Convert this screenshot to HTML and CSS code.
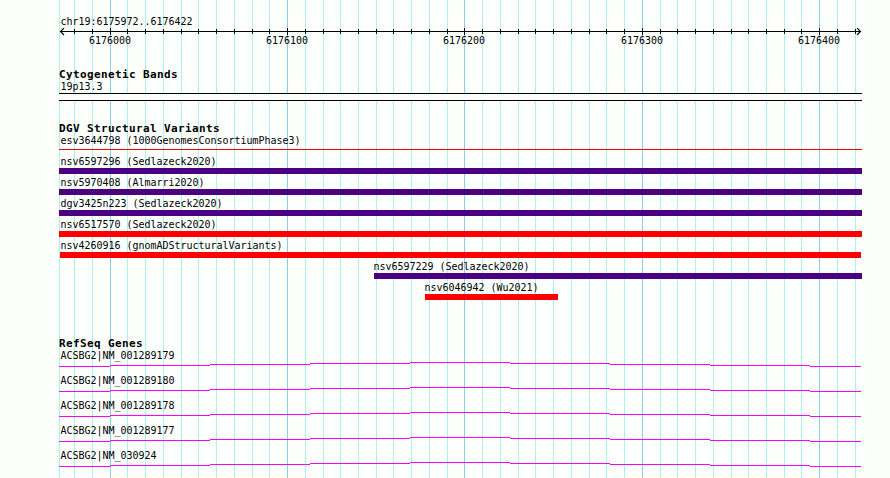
FILE: index.html
```html
<!DOCTYPE html>
<html lang="en">
<head>
    <meta charset="UTF-8">
    <title>chr19:6175972..6176422</title>
    <link rel="stylesheet" href="styles.css">
</head>
<body>
    <div class="browser">
        <!-- 10 bp / 100 bp grid -->
        <svg class="grid" width="803" height="478" viewBox="59 0 803 478">
            <path class="minor" d="M59.5 0V478M74.5 0V478M92.5 0V478M127.5 0V478M145.5 0V478M163.5 0V478M181.5 0V478M198.5 0V478M216.5 0V478M234.5 0V478M252.5 0V478M269.5 0V478M305.5 0V478M323.5 0V478M340.5 0V478M358.5 0V478M376.5 0V478M393.5 0V478M411.5 0V478M429.5 0V478M447.5 0V478M482.5 0V478M500.5 0V478M518.5 0V478M535.5 0V478M553.5 0V478M571.5 0V478M589.5 0V478M606.5 0V478M624.5 0V478M660.5 0V478M677.5 0V478M695.5 0V478M713.5 0V478M731.5 0V478M748.5 0V478M766.5 0V478M784.5 0V478M801.5 0V478M837.5 0V478M855.5 0V478"/>
            <path class="major" d="M110.5 0V478M287.5 0V478M464.5 0V478M642.5 0V478M819.5 0V478"/>
        </svg>

        <div class="tracks">
            <div class="region label">chr19:6175972..6176422</div>
            <svg class="ruler" width="803" height="20" viewBox="59 28 803 20">
                <path d="M60 31.5H861"/>
                <path d="M74.5 29V34M92.5 29V34M127.5 29V34M145.5 29V34M163.5 29V34M181.5 29V34M198.5 29V34M216.5 29V34M234.5 29V34M252.5 29V34M269.5 29V34M305.5 29V34M323.5 29V34M340.5 29V34M358.5 29V34M376.5 29V34M393.5 29V34M411.5 29V34M429.5 29V34M447.5 29V34M482.5 29V34M500.5 29V34M518.5 29V34M535.5 29V34M553.5 29V34M571.5 29V34M589.5 29V34M606.5 29V34M624.5 29V34M660.5 29V34M677.5 29V34M695.5 29V34M713.5 29V34M731.5 29V34M748.5 29V34M766.5 29V34M784.5 29V34M801.5 29V34M837.5 29V34M855.5 29V34"/>
                <path d="M110.5 28V35M287.5 28V35M464.5 28V35M642.5 28V35M819.5 28V35"/>
                <path class="arrow" d="M64 28L60.5 31.5L64 35M857 28L860.5 31.5L857 35"/>
                <text x="89" y="44">6176000</text>
                <text x="266" y="44">6176100</text>
                <text x="443" y="44">6176200</text>
                <text x="621" y="44">6176300</text>
                <text x="798" y="44">6176400</text>
            </svg>

            <div class="track cyto">
                <div class="title">Cytogenetic Bands</div>
                <div class="label">19p13.3</div>
                <div class="band"></div>
            </div>

            <div class="track variants">
                <div class="title">DGV Structural Variants</div>
                <div class="variant">
                    <div class="label">esv3644798 (1000GenomesConsortiumPhase3)</div>
                    <div class="bar thin"></div>
                </div>
                <div class="variant">
                    <div class="label">nsv6597296 (Sedlazeck2020)</div>
                    <div class="bar complex"></div>
                </div>
                <div class="variant">
                    <div class="label">nsv5970408 (Almarri2020)</div>
                    <div class="bar complex"></div>
                </div>
                <div class="variant">
                    <div class="label">dgv3425n223 (Sedlazeck2020)</div>
                    <div class="bar complex"></div>
                </div>
                <div class="variant">
                    <div class="label">nsv6517570 (Sedlazeck2020)</div>
                    <div class="bar loss"></div>
                </div>
                <div class="variant">
                    <div class="label">nsv4260916 (gnomADStructuralVariants)</div>
                    <div class="bar loss inset"></div>
                </div>
                <div class="variant partial" style="margin-left: 315px">
                    <div class="label">nsv6597229 (Sedlazeck2020)</div>
                    <div class="bar complex"></div>
                </div>
                <div class="variant partial" style="margin-left: 366px">
                    <div class="label">nsv6046942 (Wu2021)</div>
                    <div class="bar loss" style="width: 133px"></div>
                </div>
            </div>

            <div class="track genes">
                <div class="title">RefSeq Genes</div>
                <div class="gene">
                    <div class="label">ACSBG2|NM_001289179</div>
                    <svg width="803" height="5" viewBox="59 0 803 5"><path d="M59 4.5H110M110 3.5H210M210 2.5H310M310 1.5H410M410 .5H510M510 1.5H610M610 2.5H710M710 3.5H810M810 4.5H861"/></svg>
                </div>
                <div class="gene">
                    <div class="label">ACSBG2|NM_001289180</div>
                    <svg width="803" height="5" viewBox="59 0 803 5"><path d="M59 4.5H110M110 3.5H210M210 2.5H310M310 1.5H410M410 .5H510M510 1.5H610M610 2.5H710M710 3.5H810M810 4.5H861"/></svg>
                </div>
                <div class="gene">
                    <div class="label">ACSBG2|NM_001289178</div>
                    <svg width="803" height="5" viewBox="59 0 803 5"><path d="M59 4.5H110M110 3.5H210M210 2.5H310M310 1.5H410M410 .5H510M510 1.5H610M610 2.5H710M710 3.5H810M810 4.5H861"/></svg>
                </div>
                <div class="gene">
                    <div class="label">ACSBG2|NM_001289177</div>
                    <svg width="803" height="5" viewBox="59 0 803 5"><path d="M59 4.5H110M110 3.5H210M210 2.5H310M310 1.5H410M410 .5H510M510 1.5H610M610 2.5H710M710 3.5H810M810 4.5H861"/></svg>
                </div>
                <div class="gene">
                    <div class="label">ACSBG2|NM_030924</div>
                    <svg width="803" height="5" viewBox="59 0 803 5"><path d="M59 4.5H110M110 3.5H210M210 2.5H310M310 1.5H410M410 .5H510M510 1.5H610M610 2.5H710M710 3.5H810M810 4.5H861"/></svg>
                </div>
            </div>
        </div>
    </div>
</body>
</html>
```

FILE: styles.css
```css
body {
    margin: 0;
    background-color: #fdfffc;
    color: #000;
    font-family: "DejaVu Sans Mono", monospace;
    font-size: 10px;
    letter-spacing: -0.02px;
}
svg {
    display: block;
}
path {
    fill: none;
    stroke: #000;
    stroke-width: 1;
}
.browser {
    display: grid;
    width: 803px;
    height: 478px;
    padding-left: 59px;
    overflow: hidden;
}
/* grid lines and tracks share one cell */
.grid,
.tracks {
    grid-area: 1 / 1;
}
.grid .minor {
    stroke: #afeeee;
}
.grid .major {
    stroke: #87ceeb;
}
.label {
    height: 13px;
    line-height: 13px;
    padding-left: 1.5px;
    white-space: nowrap;
}
.title {
    height: 14px;
    line-height: 18px;
    font-size: 11px;
    font-weight: bold;
    letter-spacing: 0.38px;
    white-space: nowrap;
}
.region {
    padding-top: 15px;
}
.ruler .arrow {
    stroke-width: 1.1;
}
.cyto {
    padding-top: 18px;
}
.band {
    box-sizing: border-box;
    height: 8px;
    border-top: 1px solid #000;
    border-bottom: 1px solid #000;
    background-color: #fdfffc;
}
.variants {
    padding-top: 19px;
}
.variant {
    height: 21px;
}
.partial .label {
    padding-left: 0;
    text-indent: -0.5px;
}
.bar {
    height: 6px;
}
.thin {
    height: 1px;
    margin-top: 2px;
    background-color: #f00;
}
.complex {
    background-color: #4b0082;
}
.loss {
    background-color: #f00;
}
.inset {
    margin: 0 1px;
}
.genes {
    padding-top: 33px;
}
.gene {
    height: 25px;
}
.gene path {
    stroke: #f0f;
}
```
